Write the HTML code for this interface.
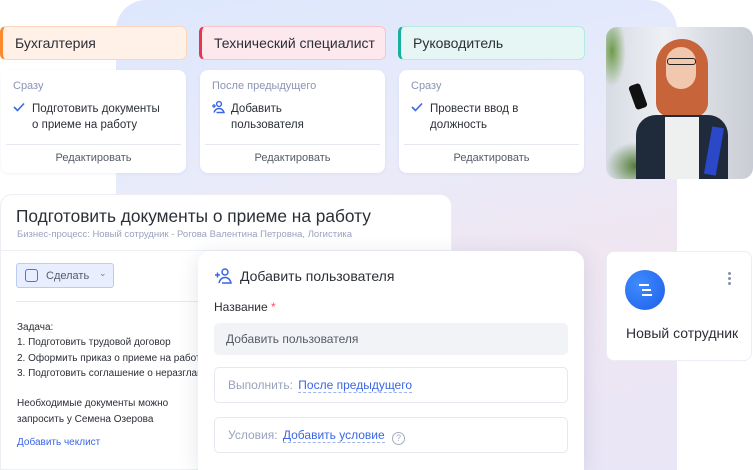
<!DOCTYPE html>
<html style="overflow:hidden;height:470px"><head><meta charset="utf-8"><style>
*{box-sizing:border-box;margin:0;padding:0}
body{width:753px;height:470px;overflow:hidden;background:#fff;font-family:"Liberation Sans",sans-serif;position:relative;color:#2b2f36}
.abs{position:absolute}
.bg{left:116px;top:0;width:561px;height:470px;border-radius:30px 30px 0 0;background:linear-gradient(170deg,#dde7fd 0%,#e9ebfa 35%,#efe6f1 60%,#e9e6f7 100%)}
.hdr{top:26px;height:34px;width:187px;border-radius:6px;font-size:14px;line-height:32px;padding-left:12px;border:1px solid}
.card{top:70px;height:103px;width:185px;background:#fff;border-radius:8px;box-shadow:0 1px 3px rgba(80,90,140,.08)}
.card .t{position:absolute;left:12px;top:10px;font-size:11px;color:#8b95b5}
.card .m{position:absolute;left:31px;top:31px;font-size:11.5px;line-height:16px;color:#2b2f36}
.card .ic{position:absolute;left:12px;top:32px}
.card .d{position:absolute;left:5px;right:5px;top:74px;border-top:1px solid #e6e8f1}
.card .e{position:absolute;left:0;right:0;top:82px;text-align:center;font-size:11px;color:#555b66}
</style></head><body>
<div class="abs bg"></div>

<div class="abs hdr" style="left:0;background:#fff1e8;border-color:#fbd6bd;border-left:3px solid #fb8a2e">Бухгалтерия</div>
<div class="abs hdr" style="left:199px;background:#fde9ed;border-color:#f8c3cc;border-left:3px solid #e8364f">Технический специалист</div>
<div class="abs hdr" style="left:398px;background:#e6f6f4;border-color:#b7e9e1;border-left:3px solid #17b09c">Руководитель</div>

<div class="abs card" style="left:1px"><div class="t">Сразу</div>
<svg class="ic" width="12" height="10" viewBox="0 0 12 10"><path d="M1 5l3.5 3.5L11 1.5" fill="none" stroke="#3a66e6" stroke-width="1.6"/></svg>
<div class="m">Подготовить документы<br>о приеме на работу</div><div class="d"></div><div class="e">Редактировать</div></div>
<div class="abs card" style="left:200px"><div class="t">После предыдущего</div>
<svg class="ic" width="14" height="14" viewBox="0 0 14 14" style="left:11px;top:30px"><circle cx="8" cy="4" r="2.4" fill="none" stroke="#3a66e6" stroke-width="1.4"/><path d="M3 12.5c1-3 3-4 5-4s4 1 5 4H5.5" fill="none" stroke="#3a66e6" stroke-width="1.4"/><path d="M1 6h4M3 4v4" stroke="#3a66e6" stroke-width="1.3"/></svg>
<div class="m">Добавить<br>пользователя</div><div class="d"></div><div class="e">Редактировать</div></div>
<div class="abs card" style="left:399px"><div class="t">Сразу</div>
<svg class="ic" width="12" height="10" viewBox="0 0 12 10"><path d="M1 5l3.5 3.5L11 1.5" fill="none" stroke="#3a66e6" stroke-width="1.6"/></svg>
<div class="m">Провести ввод в<br>должность</div><div class="d"></div><div class="e">Редактировать</div></div>

<!-- photo -->
<div class="abs" style="left:606px;top:27px;width:147px;height:152px;border-radius:11px;overflow:hidden;background:linear-gradient(90deg,#d7dbe3,#eef0f4 40%,#d9dce3 70%,#c9ccd4)">
 <div class="abs" style="left:0;top:0;width:20px;height:60px;background:radial-gradient(ellipse at 30% 40%,#6d9b4a,transparent 70%)"></div>
 <div class="abs" style="left:0;top:115px;width:60px;height:40px;background:radial-gradient(ellipse at 50% 60%,#4f7a35,transparent 70%)"></div>
 <div class="abs" style="left:50px;top:12px;width:52px;height:78px;border-radius:26px 26px 14px 14px;background:#c8643a"></div>
 <div class="abs" style="left:60px;top:20px;width:30px;height:42px;border-radius:15px;background:#f1c7ad"></div>
 <div class="abs" style="left:61px;top:31px;width:29px;height:7px;border:1.5px solid #222;border-radius:3px"></div>
 <div class="abs" style="left:30px;top:88px;width:92px;height:70px;border-radius:20px 20px 0 0;background:#1f2a3a"></div>
 <div class="abs" style="left:59px;top:90px;width:34px;height:70px;background:#eef0ef"></div>
 <div class="abs" style="left:26px;top:57px;width:12px;height:25px;border-radius:3px;background:#111;transform:rotate(-20deg)"></div>
 <div class="abs" style="left:102px;top:100px;width:12px;height:48px;background:#2a48c8;transform:rotate(10deg)"></div>
</div>

<!-- big card -->
<div class="abs" style="left:0;top:194px;width:452px;height:276px;background:#fff;border-radius:12px 12px 0 0;border:1px solid #eceef4">
 <div class="abs" style="left:15px;top:11px;font-size:17.3px;color:#2b2f36">Подготовить документы о приеме на работу</div>
 <div class="abs" style="left:16px;top:34px;font-size:9.5px;color:#9aa3bd">Бизнес-процесс: Новый сотрудник - Рогова Валентина Петровна, Логистика</div>
 <div class="abs" style="left:0;right:0;top:55px;border-top:1px solid #eceef4"></div>
 <div class="abs" style="left:15px;top:68px;width:98px;height:25px;background:#e8eefd;border:1px solid #b9ccf3;border-radius:3px">
  <div class="abs" style="left:8px;top:5px;width:13px;height:13px;border:1.5px solid #4a72e0;border-radius:3px"></div>
  <div class="abs" style="left:29px;top:6px;font-size:11px;color:#555b66">Сделать</div>
  <div class="abs" style="left:82px;top:4px;font-size:9px;color:#6d7ba8">&#8964;</div>
 </div>
 <div class="abs" style="left:15px;right:0;top:106px;border-top:1px solid #e6e8ef"></div>
 <div class="abs" style="left:16px;top:125px;font-size:10px;line-height:15.3px;color:#2b2f36;white-space:nowrap">Задача:<br>1. Подготовить трудовой договор<br>2. Оформить приказ о приеме на работу<br>3. Подготовить соглашение о неразглашении<br><br>Необходимые документы можно<br>запросить у Семена Озерова</div>
 <div class="abs" style="left:16px;top:242px;font-size:10px;color:#3a66e6">Добавить чеклист</div>
</div>

<!-- modal -->
<div class="abs" style="left:198px;top:251px;width:386px;height:219px;background:#fff;border-radius:12px 12px 0 0;box-shadow:0 4px 20px rgba(70,80,130,.15)">
 <svg class="abs" style="left:16px;top:16px" width="18" height="18" viewBox="0 0 18 18"><circle cx="11" cy="5" r="3" fill="none" stroke="#3a66e6" stroke-width="1.5"/><path d="M5 16c1-4 3.5-5.5 6-5.5s5 1.5 6 5.5H8" fill="none" stroke="#3a66e6" stroke-width="1.5"/><path d="M1 8h5M3.5 5.5v5" stroke="#3a66e6" stroke-width="1.5"/></svg>
 <div class="abs" style="left:42px;top:17px;font-size:14px;color:#2b2f36">Добавить пользователя</div>
 <div class="abs" style="left:16px;top:49px;font-size:12px;color:#2b2f36">Название <span style="color:#f0506e">*</span></div>
 <div class="abs" style="left:16px;top:72px;width:354px;height:32px;background:#f2f3f7;border-radius:5px;font-size:12px;color:#555b66;line-height:32px;padding-left:12px">Добавить пользователя</div>
 <div class="abs" style="left:16px;top:116px;width:354px;height:36px;border:1px solid #e6e8ef;border-radius:5px;font-size:12px;color:#9aa3bd;line-height:34px;padding-left:13px">Выполнить: <span style="color:#3a66e6;border-bottom:1px dashed #9fb4ee;margin-left:2px">После предыдущего</span></div>
 <div class="abs" style="left:16px;top:166px;width:354px;height:36px;border:1px solid #e6e8ef;border-radius:5px;font-size:12px;color:#9aa3bd;line-height:34px;padding-left:13px">Условия: <span style="color:#3a66e6;border-bottom:1px dashed #9fb4ee;margin-left:2px">Добавить условие</span> <span style="display:inline-block;width:13px;height:13px;border:1.3px solid #a5acbd;border-radius:50%;font-size:9px;line-height:11px;text-align:center;color:#a5acbd;margin-left:4px;vertical-align:-2px">?</span></div>
</div>

<!-- new employee -->
<div class="abs" style="left:606px;top:251px;width:146px;height:110px;background:#fff;border-radius:8px;border:1px solid #eceef6">
 <div class="abs" style="left:18px;top:18px;width:40px;height:40px;border-radius:50%;background:radial-gradient(circle at 35% 35%,#3f8cff,#1d5ee8)"></div>
 <div class="abs" style="left:32px;top:32px;width:10px;height:2px;background:#fff"></div>
 <div class="abs" style="left:35px;top:37px;width:9px;height:2px;background:#fff"></div>
 <div class="abs" style="left:35px;top:42px;width:10px;height:2px;background:#fff"></div>
 <div class="abs" style="left:121px;top:20px;width:3px;height:3px;border-radius:50%;background:#8991a8;box-shadow:0 5px 0 #8991a8,0 10px 0 #8991a8"></div>
 <div class="abs" style="left:19px;top:73px;font-size:14px;color:#2b2f36">Новый сотрудник</div>
</div>
</body></html>
